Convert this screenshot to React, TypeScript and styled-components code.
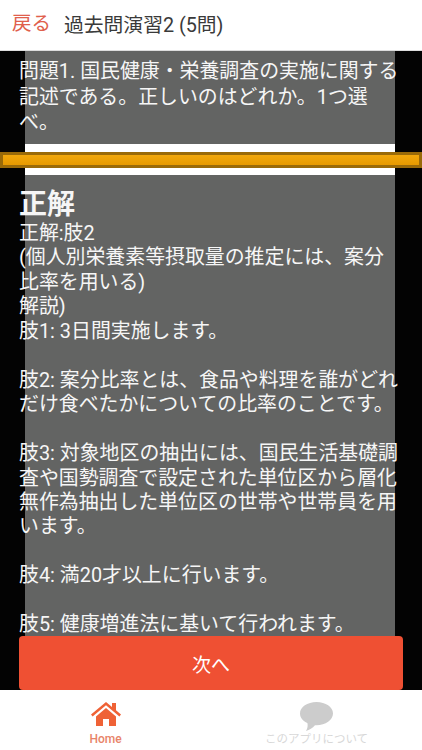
import styled, { createGlobalStyle } from 'styled-components';

const GlobalStyle = createGlobalStyle`
  html, body {
    margin: 0;
    padding: 0;
    background: #fff;
    font-family: Roboto, "Noto Sans CJK JP", sans-serif;
  }
`;
const Page = styled.div`
  display: flex;
  flex-direction: column;
  width: 422px;
  height: 750px;
  overflow: hidden;
`;
const Header = styled.header`
  display: flex;
  align-items: center;
  gap: 13px;
  flex: 0 0 51px;
  padding: 0 0 3px 12px;
  box-sizing: border-box;
  background: #fff;
  border-bottom: 1px solid #ddd;
`;
const BackLink = styled.a`
  margin-bottom: 5px;
  color: #e0604c;
  font-size: 19.5px;
`;
const Title = styled.h1`
  margin: 0;
  color: #3a3a3a;
  font-size: 19.8px;
  font-weight: 400;
`;
const Main = styled.main`
  position: relative;
  flex: 1;
  min-height: 0;
  padding: 0 27px 0 25px;
  background: #030303;
  overflow: hidden;
`;
const Panel = styled.div`
  height: 100%;
  background: #636463;
  color: #f6f6f6;
`;
const Question = styled.p`
  margin: 0 -7px 0 -6px;
  padding: 8px 0 8.5px;
  font-size: 19.9px;
  line-height: 25.5px;
`;
const Divider = styled.div`
  display: flex;
  align-items: center;
  height: 31px;
  background: #fff;
`;
const GoldBar = styled.div`
  flex: 0 0 422px;
  height: 16px;
  margin-left: -25px;
  box-sizing: border-box;
  border: 3px solid #9a6a08;
  background: linear-gradient(#f2a80c, #e79a00);
`;
const Answer = styled.div`
  margin: 0 -7px 0 -6px;
  padding-top: 13px;
  font-size: 19.9px;
  line-height: 24.45px;
`;
const Heading = styled.h2`
  margin: 0;
  font-size: 28px;
  line-height: 34px;
  font-weight: 700;
`;
const Line = styled.div<{ $gap?: boolean }>`
  margin-top: ${(p) => (p.$gap ? '24.45px' : '0')};
`;
const NextButton = styled.button`
  position: absolute;
  left: 19px;
  bottom: 0;
  width: 384px;
  height: 54px;
  border: 0;
  border-radius: 4px;
  background: #ef5033;
  color: #fff;
  font: inherit;
  font-size: 19px;
`;
const TabBar = styled.nav`
  display: flex;
  flex: 0 0 60px;
  background: #fff;
`;
const Tab = styled.div<{ $active?: boolean }>`
  display: flex;
  flex: 1;
  flex-direction: column;
  align-items: center;
  padding-top: 12px;
  color: ${(p) => (p.$active ? '#e8846a' : '#d8d8d8')};
  font-size: ${(p) => (p.$active ? '12px' : '11.5px')};
  font-weight: ${(p) => (p.$active ? 500 : 400)};
  line-height: 14px;
`;
const IconBox = styled.div`
  height: 30px;
  svg {
    display: block;
  }
`;

export default function App() {
  return (
    <Page>
      <GlobalStyle />
      <Header>
        <BackLink>戻る</BackLink>
        <Title>過去問演習2 (5問)</Title>
      </Header>
      <Main>
        <Panel>
          <Question>問題1. 国民健康・栄養調査の実施に関する記述である。正しいのはどれか。1つ選べ。</Question>
          <Divider>
            <GoldBar />
          </Divider>
          <Answer>
            <Heading>正解</Heading>
            <Line>正解:肢2</Line>
            <Line>(個人別栄養素等摂取量の推定には、案分比率を用いる)</Line>
            <Line>解説)</Line>
            <Line>肢1: 3日間実施します。</Line>
            <Line $gap>肢2: 案分比率とは、食品や料理を誰がどれだけ食べたかについての比率のことです。</Line>
            <Line $gap>肢3: 対象地区の抽出には、国民生活基礎調査や国勢調査で設定された単位区から層化無作為抽出した単位区の世帯や世帯員を用います。</Line>
            <Line $gap>肢4: 満20才以上に行います。</Line>
            <Line $gap>肢5: 健康増進法に基いて行われます。</Line>
          </Answer>
        </Panel>
        <NextButton>次へ</NextButton>
      </Main>
      <TabBar>
        <Tab $active>
          <IconBox>
            <svg viewBox="0 0 30 24" width="30" height="24" fill="#ef6236">
              <path d="M15 0 0 12.500l1.600 2L15 3.300l13.400 11.200 1.600-2-5-4.200V1h-4v4z" />
              <path d="M5 14.500 15 6l10 8.500V24H18v-7h-6v7H5z" />
            </svg>
          </IconBox>
          Home
        </Tab>
        <Tab>
          <IconBox>
            <svg viewBox="0 0 33 29" width="33" height="29" fill="#cccccc">
              <path d="M16.500 0C7.400 0 0 5 0 11.400c0 4 2.800 7.500 7.400 9.500.6 2.800.2 5.300-1.400 8.100 3.500-1 6.500-3 9-5.800h1.500C25.600 23 33 17.800 33 11.400S25.600 0 16.500 0z" />
            </svg>
          </IconBox>
          このアプリについて
        </Tab>
      </TabBar>
    </Page>
  );
}
